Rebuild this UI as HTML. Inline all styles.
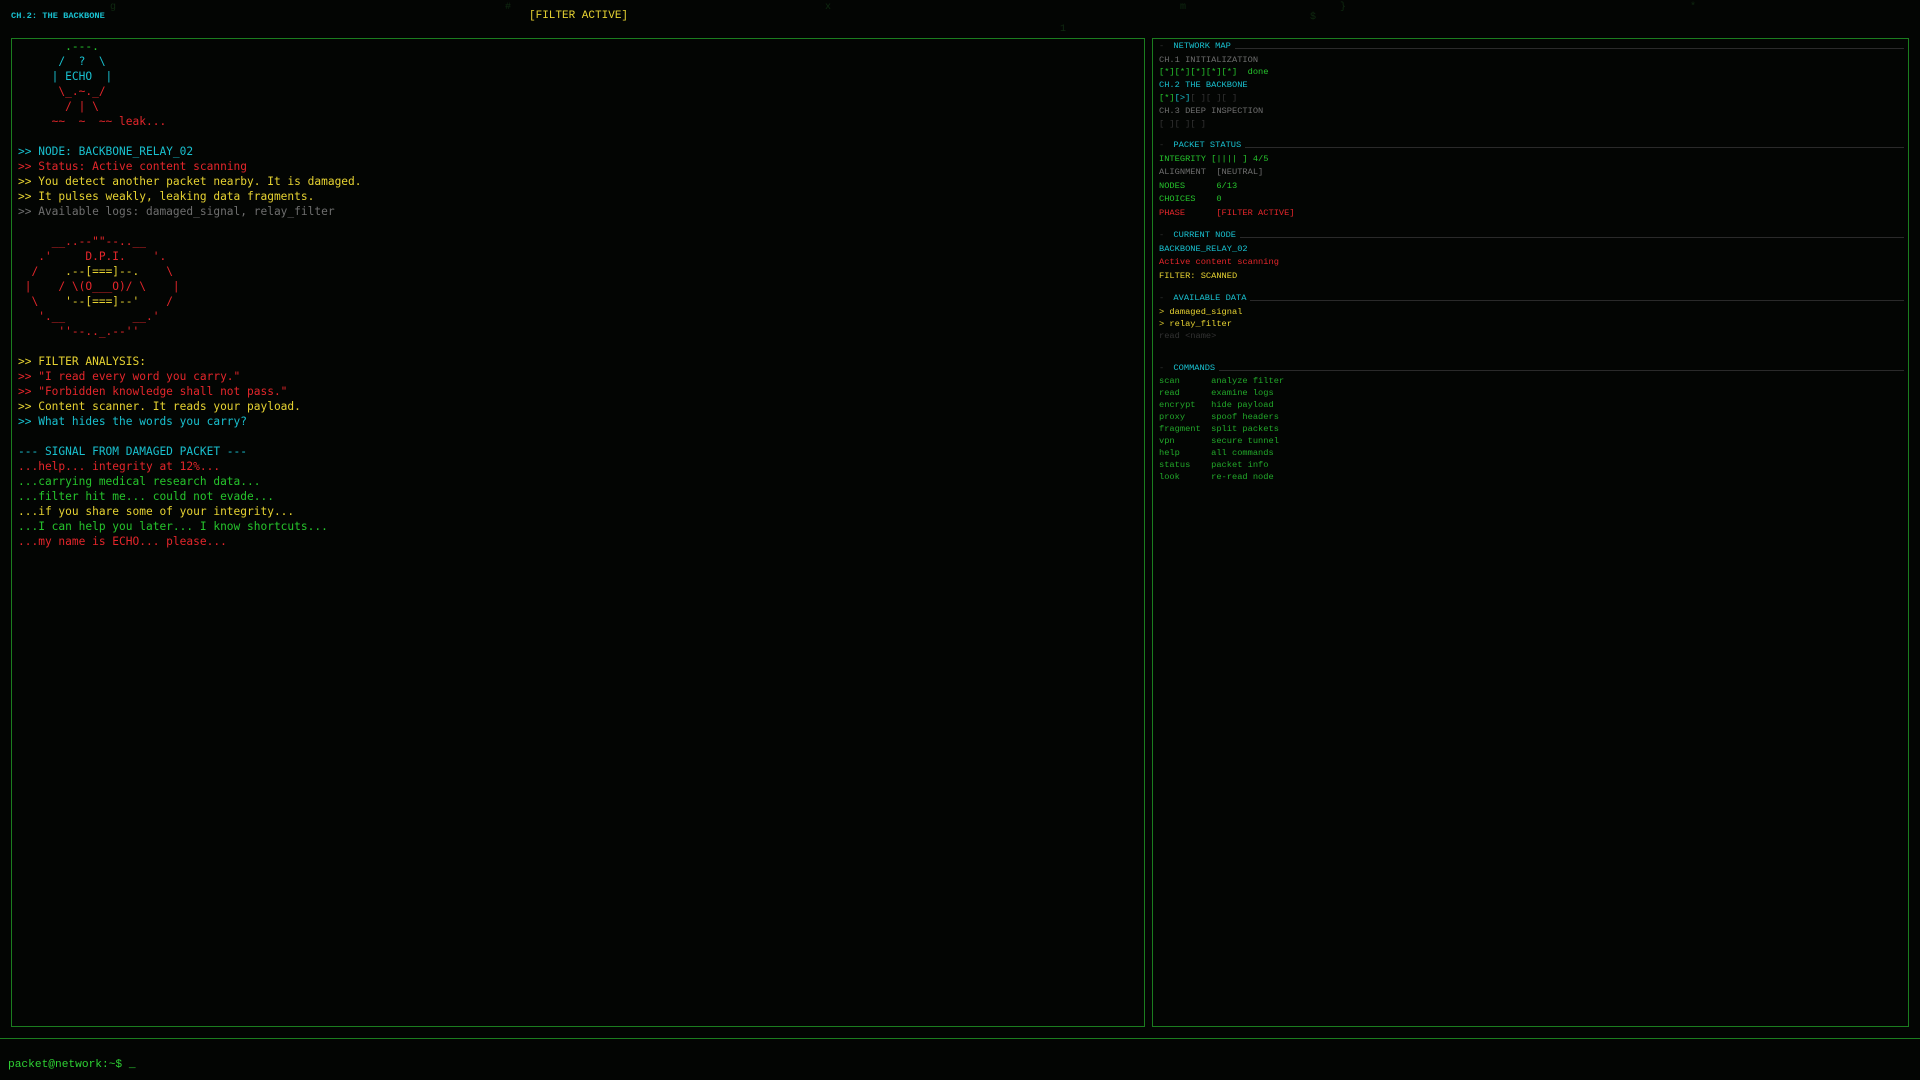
<!DOCTYPE html>
<html><head><meta charset="utf-8"><style>
html,body{margin:0;padding:0;background:#030503;width:1920px;height:1080px;overflow:hidden;font-family:"Liberation Mono",monospace;}
.a{position:absolute;white-space:pre;}
.c{color:#19c0cf}.r{color:#e4262b}.y{color:#e6d232}.g{color:#26c42c}.d{color:#6e6e6e}.dd{color:#333}
.g2{color:#22a82a}
#left{position:absolute;left:11px;top:38px;width:1132px;height:987px;border:1px solid #1b7d1f;}
#right{position:absolute;left:1152px;top:38px;width:755px;height:987px;border:1px solid #1b7d1f;}
#lt{position:absolute;left:6px;top:0px;font-size:11.2px;line-height:15px;margin:0;}
.rp{position:absolute;left:6px;font-size:8.7px;line-height:13px;white-space:pre;}
.hdr{position:absolute;left:6px;right:4px;height:13px;font-size:8.7px;top:0;}
.hdr span{background:#030503;position:relative;z-index:1;padding-right:4px;}
.hdr:after{content:"";position:absolute;left:0;right:0;top:7px;border-top:1px solid #2a2a2a;}
.bg{position:absolute;color:#0f2a10;font-size:10px;}
</style></head><body>
<div class="bg" style="left:110px;top:2px">g</div><div class="bg" style="left:505px;top:2px">#</div>
<div class="bg" style="left:825px;top:2px">x</div><div class="bg" style="left:1180px;top:2px">m</div>
<div class="bg" style="left:1340px;top:2px">}</div><div class="bg" style="left:1690px;top:2px">*</div>
<div class="bg" style="left:1060px;top:24px">1</div><div class="bg" style="left:1310px;top:12px">$</div>
<div class="a c" style="left:11px;top:11px;font-size:8.7px;font-weight:bold">CH.2: THE BACKBONE</div>
<div class="a y" style="left:529px;top:10px;font-size:11px">[FILTER ACTIVE]</div>
<div id="left"><pre id="lt"><span class="g">       .---.</span>
<span class="c">      /  ?  \</span>
<span class="c">     | ECHO  |</span>
<span class="r">      \_.~._/</span>
<span class="r">       / | \</span>
<span class="r">     ~~  ~  ~~ leak...</span>

<span class="c">&gt;&gt; NODE: BACKBONE_RELAY_02</span>
<span class="r">&gt;&gt; Status: Active content scanning</span>
<span class="y">&gt;&gt; You detect another packet nearby. It is damaged.</span>
<span class="y">&gt;&gt; It pulses weakly, leaking data fragments.</span>
<span class="d">&gt;&gt; Available logs: damaged_signal, relay_filter</span>

<span class="r">     __..--""--..__</span>
<span class="r">   .'     D.P.I.    '.</span>
<span class="r">  /    </span><span class="y">.--[===]--.</span><span class="r">    \</span>
<span class="r"> |    / \(O___O)/ \    |</span>
<span class="r">  \    </span><span class="y">'--[===]--'</span><span class="r">    /</span>
<span class="r">   '.__          __.'</span>
<span class="r">      ''--.._.--''</span>

<span class="y">&gt;&gt; FILTER ANALYSIS:</span>
<span class="r">&gt;&gt; "I read every word you carry."</span>
<span class="r">&gt;&gt; "Forbidden knowledge shall not pass."</span>
<span class="y">&gt;&gt; Content scanner. It reads your payload.</span>
<span class="c">&gt;&gt; What hides the words you carry?</span>

<span class="c">--- SIGNAL FROM DAMAGED PACKET ---</span>
<span class="r">...help... integrity at 12%...</span>
<span class="g">...carrying medical research data...</span>
<span class="g">...filter hit me... could not evade...</span>
<span class="y">...if you share some of your integrity...</span>
<span class="g">...I can help you later... I know shortcuts...</span>
<span class="r">...my name is ECHO... please...</span></pre></div>
<div id="right">
<div class="hdr c" style="top:2px"><span><span class="dd">-</span> NETWORK MAP</span></div>
<div class="rp d" style="top:15px">CH.1 INITIALIZATION</div>
<div class="rp g" style="top:27px">[*][*][*][*][*]  done</div>
<div class="rp c" style="top:40px">CH.2 THE BACKBONE</div>
<div class="rp" style="top:53px"><span class="g">[*]</span><span class="c">[&gt;]</span><span class="dd">[ ][ ][ ]</span></div>
<div class="rp d" style="top:66px">CH.3 DEEP INSPECTION</div>
<div class="rp dd" style="top:79px">[ ][ ][ ]</div>
<div class="hdr c" style="top:101px"><span><span class="dd">-</span> PACKET STATUS</span></div>
<div class="rp g" style="top:114px">INTEGRITY [|||| ] 4/5</div>
<div class="rp d" style="top:127px">ALIGNMENT  [NEUTRAL]</div>
<div class="rp g" style="top:141px">NODES      6/13</div>
<div class="rp g" style="top:154px">CHOICES    0</div>
<div class="rp r" style="top:168px">PHASE      [FILTER ACTIVE]</div>
<div class="hdr c" style="top:191px"><span><span class="dd">-</span> CURRENT NODE</span></div>
<div class="rp c" style="top:204px">BACKBONE_RELAY_02</div>
<div class="rp r" style="top:217px">Active content scanning</div>
<div class="rp y" style="top:231px">FILTER: SCANNED</div>
<div class="hdr c" style="top:254px"><span><span class="dd">-</span> AVAILABLE DATA</span></div>
<div class="rp y" style="top:267px">&gt; damaged_signal</div>
<div class="rp y" style="top:279px">&gt; relay_filter</div>
<div class="rp dd" style="top:291px">read &lt;name&gt;</div>
<div class="hdr c" style="top:324px"><span><span class="dd">-</span> COMMANDS</span></div>
<div class="rp g2" style="top:336px;line-height:12px">scan      analyze filter
read      examine logs
encrypt   hide payload
proxy     spoof headers
fragment  split packets
vpn       secure tunnel
help      all commands
status    packet info
look      re-read node</div>
</div>
<div style="position:absolute;left:0;right:0;top:1038px;border-top:1px solid #1b7d1f"></div>
<div class="a" style="left:8px;top:1059px;font-size:11.2px;color:#2ed234">packet@network:~$ _</div>
</body></html>
